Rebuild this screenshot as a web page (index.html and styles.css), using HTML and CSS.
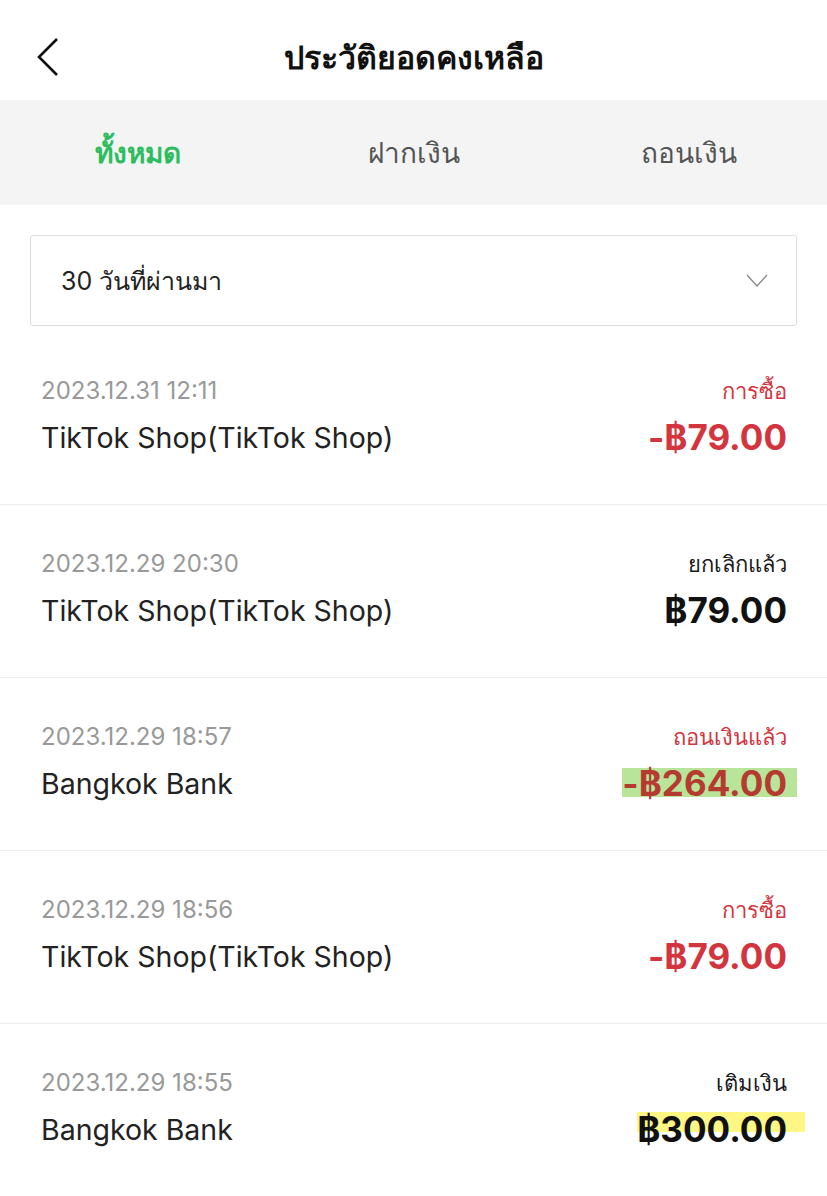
FILE: index.html
```html
<!DOCTYPE html>
<html lang="th">
<head>
    <meta charset="UTF-8">
    <meta name="viewport" content="width=device-width, initial-scale=1.0">
    <title>ประวัติยอดคงเหลือ</title>
    <link rel="stylesheet" href="styles.css">
</head>
<body>

<div class="header">
    <span class="back">
        <svg width="24" height="40" viewBox="0 0 24 40"><path d="M21 2 L3 20 L21 38" fill="none" stroke="#111" stroke-width="2.6"/></svg>
    </span>
    <h1>ประวัติยอดคงเหลือ</h1>
</div>

<div class="tabs">
    <div class="tab active">ทั้งหมด</div>
    <div class="tab">ฝากเงิน</div>
    <div class="tab">ถอนเงิน</div>
</div>

<div class="filter">
    <div class="select">
        <span>30 วันที่ผ่านมา</span>
        <svg width="22" height="14" viewBox="0 0 22 14"><path d="M1 1 L11 12 L21 1" fill="none" stroke="#888" stroke-width="1.3"/></svg>
    </div>
</div>

<div class="list">
    <div class="item">
        <div class="left">
            <div class="date">2023.12.31 12:11</div>
            <div class="name">TikTok Shop(TikTok Shop)</div>
        </div>
        <div class="right">
            <div class="type red">การซื้อ</div>
            <div class="amount red">-฿79.00</div>
        </div>
    </div>
    <div class="item">
        <div class="left">
            <div class="date">2023.12.29 20:30</div>
            <div class="name">TikTok Shop(TikTok Shop)</div>
        </div>
        <div class="right">
            <div class="type">ยกเลิกแล้ว</div>
            <div class="amount">฿79.00</div>
        </div>
    </div>
    <div class="item">
        <div class="left">
            <div class="date">2023.12.29 18:57</div>
            <div class="name">Bangkok Bank</div>
        </div>
        <div class="right">
            <div class="type red">ถอนเงินแล้ว</div>
            <div class="amount red"><span class="mark green">-฿264.00</span></div>
        </div>
    </div>
    <div class="item">
        <div class="left">
            <div class="date">2023.12.29 18:56</div>
            <div class="name">TikTok Shop(TikTok Shop)</div>
        </div>
        <div class="right">
            <div class="type red">การซื้อ</div>
            <div class="amount red">-฿79.00</div>
        </div>
    </div>
    <div class="item last">
        <div class="left">
            <div class="date">2023.12.29 18:55</div>
            <div class="name">Bangkok Bank</div>
        </div>
        <div class="right">
            <div class="type">เติมเงิน</div>
            <div class="amount"><span class="mark yellow">฿300.00</span></div>
        </div>
    </div>
</div>

</body>
</html>
```

FILE: styles.css
```css
body {
    margin: 0;
    padding: 0;
    background-color: #fff;
    font-family: Inter, "Liberation Sans", "Noto Sans", sans-serif;
    color: #1a1a1a;
}

.header {
    height: 100px;
    box-sizing: border-box;
    padding-top: 14px;
    display: flex;
    align-items: center;
    justify-content: center;
    position: relative;
}

.header .back {
    position: absolute;
    left: 36px;
    top: 37px;
}

.header h1 {
    margin: 0;
    font-size: 32px;
    font-weight: bold;
    color: #111;
}

.tabs {
    height: 105px;
    background-color: #f4f4f4;
    display: flex;
    align-items: center;
}

.tab {
    flex: 1;
    text-align: center;
    font-size: 28px;
    color: #555;
}

.tab.active {
    color: #2cbd5e;
    font-weight: bold;
}

.filter {
    padding: 30px 30px 6px 30px;
}

.select {
    height: 89px;
    border: 1px solid #dedede;
    border-radius: 3px;
    display: flex;
    align-items: center;
    justify-content: space-between;
    padding: 0 28px 0 30px;
    font-size: 25px;
    color: #222;
}

.item {
    height: 172px;
    border-bottom: 1px solid #ececec;
    display: flex;
    justify-content: space-between;
    padding: 0 40px 0 41px;
}

.item.last {
    border-bottom: none;
}

.left, .right {
    padding-top: 44px;
}

.right {
    text-align: right;
}

.date {
    font-size: 24px;
    color: #999;
    height: 30px;
    line-height: 30px;
}

.name {
    font-size: 28.5px;
    color: #222;
    margin-top: 16px;
    line-height: 32px;
}

.type {
    font-size: 22px;
    color: #1a1a1a;
    height: 30px;
    line-height: 30px;
}

.amount {
    font-size: 35px;
    font-weight: bold;
    color: #111;
    margin-top: 12px;
    line-height: 38px;
}

.red {
    color: #d3343e;
}

.mark.green {
    background: linear-gradient(to bottom, transparent 14%, rgba(160, 220, 120, 0.75) 14%, rgba(160, 220, 120, 0.75) 84%, transparent 84%);
    color: #b53a30;
    padding-right: 10px;
    margin-right: -10px;
}

.mark.yellow {
    background: linear-gradient(to bottom, transparent 10%, rgba(255, 245, 110, 0.85) 10%, rgba(255, 245, 110, 0.85) 58%, transparent 58%);
    padding-right: 18px;
    margin-right: -18px;
}
```
